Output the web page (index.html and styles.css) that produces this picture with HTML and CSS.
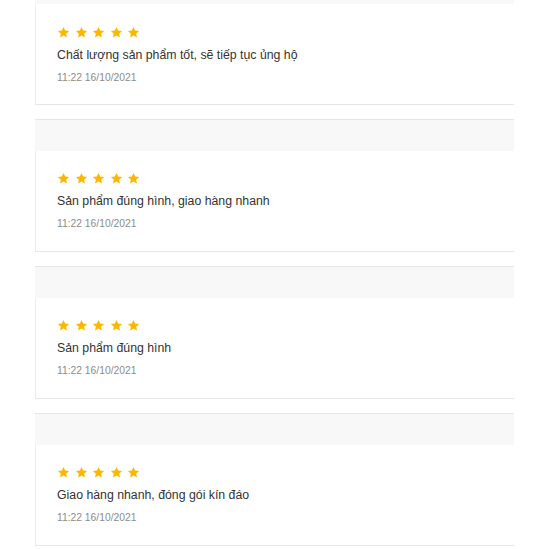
FILE: index.html
```html
<!DOCTYPE html>
<html lang="vi">
<head>
<meta charset="utf-8">
<link rel="stylesheet" href="styles.css">
</head>
<body>
<div class="list">
  <div class="band band-top"></div>
  <div class="review review-first">
    <div class="stars">
      <svg viewBox="0 0 24 24"><path d="M12 1.8l3.1 6.6 7.2.8-5.4 4.9 1.5 7.1L12 17.6l-6.4 3.6 1.5-7.1-5.4-4.9 7.2-.8z"/></svg>
      <svg viewBox="0 0 24 24"><path d="M12 1.8l3.1 6.6 7.2.8-5.4 4.9 1.5 7.1L12 17.6l-6.4 3.6 1.5-7.1-5.4-4.9 7.2-.8z"/></svg>
      <svg viewBox="0 0 24 24"><path d="M12 1.8l3.1 6.6 7.2.8-5.4 4.9 1.5 7.1L12 17.6l-6.4 3.6 1.5-7.1-5.4-4.9 7.2-.8z"/></svg>
      <svg viewBox="0 0 24 24"><path d="M12 1.8l3.1 6.6 7.2.8-5.4 4.9 1.5 7.1L12 17.6l-6.4 3.6 1.5-7.1-5.4-4.9 7.2-.8z"/></svg>
      <svg viewBox="0 0 24 24"><path d="M12 1.8l3.1 6.6 7.2.8-5.4 4.9 1.5 7.1L12 17.6l-6.4 3.6 1.5-7.1-5.4-4.9 7.2-.8z"/></svg>
    </div>
    <div class="text">Chất lượng sản phẩm tốt, sẽ tiếp tục ủng hộ</div>
    <div class="date">11:22 16/10/2021</div>
  </div>
  <div class="gap"></div>
  <div class="band"></div>
  <div class="review">
    <div class="stars">
      <svg viewBox="0 0 24 24"><path d="M12 1.8l3.1 6.6 7.2.8-5.4 4.9 1.5 7.1L12 17.6l-6.4 3.6 1.5-7.1-5.4-4.9 7.2-.8z"/></svg>
      <svg viewBox="0 0 24 24"><path d="M12 1.8l3.1 6.6 7.2.8-5.4 4.9 1.5 7.1L12 17.6l-6.4 3.6 1.5-7.1-5.4-4.9 7.2-.8z"/></svg>
      <svg viewBox="0 0 24 24"><path d="M12 1.8l3.1 6.6 7.2.8-5.4 4.9 1.5 7.1L12 17.6l-6.4 3.6 1.5-7.1-5.4-4.9 7.2-.8z"/></svg>
      <svg viewBox="0 0 24 24"><path d="M12 1.8l3.1 6.6 7.2.8-5.4 4.9 1.5 7.1L12 17.6l-6.4 3.6 1.5-7.1-5.4-4.9 7.2-.8z"/></svg>
      <svg viewBox="0 0 24 24"><path d="M12 1.8l3.1 6.6 7.2.8-5.4 4.9 1.5 7.1L12 17.6l-6.4 3.6 1.5-7.1-5.4-4.9 7.2-.8z"/></svg>
    </div>
    <div class="text">Sản phẩm đúng hình, giao hàng nhanh</div>
    <div class="date">11:22 16/10/2021</div>
  </div>
  <div class="gap"></div>
  <div class="band"></div>
  <div class="review">
    <div class="stars">
      <svg viewBox="0 0 24 24"><path d="M12 1.8l3.1 6.6 7.2.8-5.4 4.9 1.5 7.1L12 17.6l-6.4 3.6 1.5-7.1-5.4-4.9 7.2-.8z"/></svg>
      <svg viewBox="0 0 24 24"><path d="M12 1.8l3.1 6.6 7.2.8-5.4 4.9 1.5 7.1L12 17.6l-6.4 3.6 1.5-7.1-5.4-4.9 7.2-.8z"/></svg>
      <svg viewBox="0 0 24 24"><path d="M12 1.8l3.1 6.6 7.2.8-5.4 4.9 1.5 7.1L12 17.6l-6.4 3.6 1.5-7.1-5.4-4.9 7.2-.8z"/></svg>
      <svg viewBox="0 0 24 24"><path d="M12 1.8l3.1 6.6 7.2.8-5.4 4.9 1.5 7.1L12 17.6l-6.4 3.6 1.5-7.1-5.4-4.9 7.2-.8z"/></svg>
      <svg viewBox="0 0 24 24"><path d="M12 1.8l3.1 6.6 7.2.8-5.4 4.9 1.5 7.1L12 17.6l-6.4 3.6 1.5-7.1-5.4-4.9 7.2-.8z"/></svg>
    </div>
    <div class="text">Sản phẩm đúng hình</div>
    <div class="date">11:22 16/10/2021</div>
  </div>
  <div class="gap"></div>
  <div class="band"></div>
  <div class="review">
    <div class="stars">
      <svg viewBox="0 0 24 24"><path d="M12 1.8l3.1 6.6 7.2.8-5.4 4.9 1.5 7.1L12 17.6l-6.4 3.6 1.5-7.1-5.4-4.9 7.2-.8z"/></svg>
      <svg viewBox="0 0 24 24"><path d="M12 1.8l3.1 6.6 7.2.8-5.4 4.9 1.5 7.1L12 17.6l-6.4 3.6 1.5-7.1-5.4-4.9 7.2-.8z"/></svg>
      <svg viewBox="0 0 24 24"><path d="M12 1.8l3.1 6.6 7.2.8-5.4 4.9 1.5 7.1L12 17.6l-6.4 3.6 1.5-7.1-5.4-4.9 7.2-.8z"/></svg>
      <svg viewBox="0 0 24 24"><path d="M12 1.8l3.1 6.6 7.2.8-5.4 4.9 1.5 7.1L12 17.6l-6.4 3.6 1.5-7.1-5.4-4.9 7.2-.8z"/></svg>
      <svg viewBox="0 0 24 24"><path d="M12 1.8l3.1 6.6 7.2.8-5.4 4.9 1.5 7.1L12 17.6l-6.4 3.6 1.5-7.1-5.4-4.9 7.2-.8z"/></svg>
    </div>
    <div class="text">Giao hàng nhanh, đóng gói kín đáo</div>
    <div class="date">11:22 16/10/2021</div>
  </div>
</div>
</body>
</html>
```

FILE: styles.css
```css
html, body {
  margin: 0;
  padding: 0;
  background: #ffffff;
}
body {
  font-family: "Liberation Sans", Arial, sans-serif;
}
.list {
  margin-left: 35px;
  width: 479px;
  display: flex;
  flex-direction: column;
}
.band {
  height: 31px;
  background: #f8f8f8;
  border-top: 1px solid #e6e6e6;
}
.band-top {
  height: 4px;
  border-top: none;
}
.gap {
  height: 14px;
}
.review {
  height: 101px;
  box-sizing: border-box;
  border-left: 1px solid #ececec;
  border-bottom: 1px solid #e6e6e6;
  padding: 20px 0 0 21px;
  display: flex;
  flex-direction: column;
}
.review-first {
  padding-top: 21px;
}
.stars {
  display: flex;
  gap: 4.6px;
  height: 14px;
  align-items: center;
}
.stars svg {
  width: 13px;
  height: 13px;
  fill: #fcb800;
  flex: none;
}
.text {
  margin-top: 8px;
  font-size: 12.3px;
  line-height: 16px;
  color: #333333;
}
.date {
  margin-top: 8px;
  font-size: 10.3px;
  line-height: 13px;
  color: #8c8c8c;
}
```
